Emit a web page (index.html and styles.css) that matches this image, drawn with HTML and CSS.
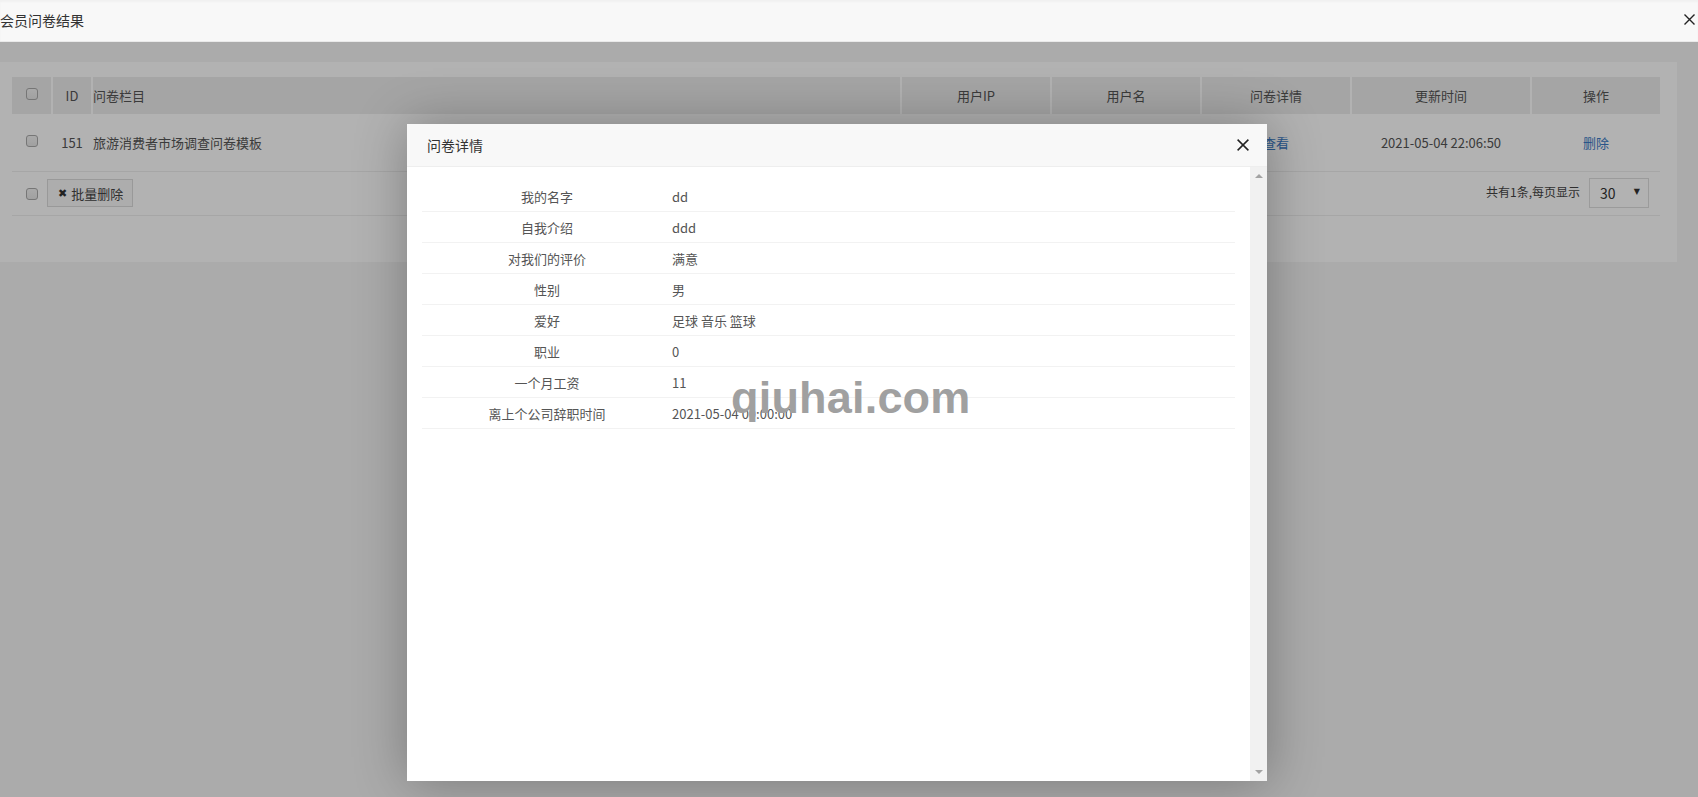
FILE: index.html
```html
<!DOCTYPE html>
<html lang="zh-CN">
<head>
<meta charset="utf-8">
<title>会员问卷结果</title>
<link rel="stylesheet" href="styles.css">
</head>
<body>
<div class="layer-title">
  <span class="layer-title-text">会员问卷结果</span>
  <svg class="layer-close" width="11" height="11" viewBox="0 0 11 11"><path d="M0.5 0.5 L10.5 10.5 M10.5 0.5 L0.5 10.5" stroke="#222" stroke-width="1.4" fill="none"/></svg>
</div>
<div class="content">
  <div class="panel">
    <div class="grid head">
      <div class="cell c-center"><span class="cb"></span></div>
      <div class="cell c-center">ID</div>
      <div class="cell">问卷栏目</div>
      <div class="cell c-center">用户IP</div>
      <div class="cell c-center">用户名</div>
      <div class="cell c-center">问卷详情</div>
      <div class="cell c-center">更新时间</div>
      <div class="cell c-center">操作</div>
    </div>
    <div class="grid row">
      <div class="cell c-center"><span class="cb"></span></div>
      <div class="cell c-center">151</div>
      <div class="cell">旅游消费者市场调查问卷模板</div>
      <div class="cell c-center"></div>
      <div class="cell c-center"></div>
      <div class="cell c-center"><a class="link">查看</a></div>
      <div class="cell c-center">2021-05-04 22:06:50</div>
      <div class="cell c-center"><a class="link">删除</a></div>
    </div>
    <div class="foot">
      <div class="foot-left">
        <span class="cb"></span>
        <button class="btn"><span class="btn-icon">✖</span>批量删除</button>
      </div>
      <div class="foot-right">
        <span class="page-info">共有1条,每页显示</span>
        <div class="select"><span>30</span><span class="select-arrow">▼</span></div>
      </div>
    </div>
  </div>

  <div class="shade"></div>

  <div class="modal">
    <div class="modal-head">
      <span class="modal-title">问卷详情</span>
      <svg class="modal-close" width="12" height="12" viewBox="0 0 12 12"><path d="M0.6 0.6 L11.4 11.4 M11.4 0.6 L0.6 11.4" stroke="#222" stroke-width="1.5" fill="none"/></svg>
    </div>
    <div class="modal-body">
      <div class="modal-scroll">
        <div class="drow"><div class="dlabel">我的名字</div><div class="dvalue">dd</div></div>
        <div class="drow"><div class="dlabel">自我介绍</div><div class="dvalue">ddd</div></div>
        <div class="drow"><div class="dlabel">对我们的评价</div><div class="dvalue">满意</div></div>
        <div class="drow"><div class="dlabel">性别</div><div class="dvalue">男</div></div>
        <div class="drow"><div class="dlabel">爱好</div><div class="dvalue">足球 音乐 篮球</div></div>
        <div class="drow"><div class="dlabel">职业</div><div class="dvalue">0</div></div>
        <div class="drow"><div class="dlabel">一个月工资</div><div class="dvalue">11</div></div>
        <div class="drow"><div class="dlabel">离上个公司辞职时间</div><div class="dvalue">2021-05-04 00:00:00</div></div>
      </div>
      <div class="scrollbar">
        <span class="sb-up"></span>
        <span class="sb-down"></span>
      </div>
    </div>
  </div>

  <div class="watermark">qiuhai.com</div>
</div>
</body>
</html>
```

FILE: styles.css
```css
* { box-sizing: border-box; }

html, body {
  margin: 0;
  padding: 0;
  height: 797px;
  overflow: hidden;
}

body {
  font-family: "Noto Sans CJK SC", "Noto Sans", sans-serif;
  color: #333;
  background: #f5f5f5;
  position: relative;
}

.layer-title {
  height: 42px;
  background: #f8f8f8;
  border-bottom: 1px solid #e9e9e9;
  display: flex;
  align-items: center;
  justify-content: space-between;
  padding: 0 3px 0 0;
  font-size: 14px;
  color: #333;
  box-shadow: inset 0 2px 2px rgba(0,0,0,0.03);
}

.layer-title-text {
  line-height: 41px;
}

.layer-close {
  display: block;
  margin-top: -2px;
}

.content {
  position: relative;
  height: 755px;
  padding-top: 20px;
  background: #f5f5f5;
}

.panel {
  background: #fff;
  margin-right: 21px;
  padding: 15px 17px 46px 12px;
}

.grid {
  display: grid;
  grid-template-columns: 39px 38px 1fr 148px 148px 148px 178px 128px;
  column-gap: 2px;
  font-size: 13px;
  color: #555;
}

.cell {
  display: flex;
  align-items: center;
  white-space: nowrap;
}

.c-center {
  justify-content: center;
}

.head {
  height: 37px;
}

.head .cell {
  background: #ececec;
}

.head .cb {
  margin-top: -3px;
}

.row {
  height: 58px;
  border-bottom: 1px solid #eee;
}

.row .cb {
  margin-top: -3px;
}

.link {
  color: #3b7ac4;
  text-decoration: none;
}

.cb {
  display: inline-block;
  width: 12px;
  height: 12px;
  border: 1px solid #a9a9a9;
  border-radius: 3px;
  background: linear-gradient(#f3f3f3, #e6e6e6);
}

.foot {
  height: 44px;
  border-bottom: 1px solid #eee;
  display: flex;
  align-items: center;
  justify-content: space-between;
  padding: 0 11px 1px 14px;
}

.foot-left {
  display: flex;
  align-items: center;
  gap: 9px;
}

.foot-left .cb {
  margin-top: 2px;
}

.btn {
  height: 28px;
  padding: 0 9px 0 10px;
  border: 1px solid #dcdcdc;
  background: #f8f8f8;
  font-family: inherit;
  font-size: 13px;
  color: #444;
  display: flex;
  align-items: center;
  gap: 4px;
}

.btn-icon {
  font-family: "DejaVu Sans", sans-serif;
  font-size: 11px;
  font-weight: bold;
  color: #333;
}

.foot-right {
  display: flex;
  align-items: center;
  gap: 9px;
}

.page-info {
  font-size: 12px;
  color: #444;
  margin-top: -4px;
}

.select {
  width: 60px;
  height: 30px;
  border: 1px solid #dedede;
  background: #fff;
  display: flex;
  align-items: center;
  justify-content: space-between;
  padding: 0 8px 0 10px;
  font-size: 14px;
  color: #333;
}

.select-arrow {
  font-family: "DejaVu Sans", sans-serif;
  font-size: 8px;
  margin-top: -3px;
}

.shade {
  position: absolute;
  left: 0;
  top: 0;
  right: 0;
  bottom: 0;
  background: rgba(0, 0, 0, 0.3);
}

.modal {
  position: absolute;
  left: 407px;
  top: 82px;
  width: 860px;
  height: 657px;
  background: #fff;
  box-shadow: 1px 1px 50px rgba(0, 0, 0, 0.3);
  display: flex;
  flex-direction: column;
}

.modal-head {
  height: 43px;
  background: #f8f8f8;
  border-bottom: 1px solid #eee;
  display: flex;
  align-items: center;
  justify-content: space-between;
  padding: 0 18px 0 20px;
  flex: none;
}

.modal-title {
  font-size: 14px;
  color: #333;
}

.modal-close {
  display: block;
}

.modal-body {
  flex: 1;
  display: flex;
  min-height: 0;
}

.modal-scroll {
  flex: 1;
  padding: 14px 15px 0 15px;
}

.drow {
  display: flex;
  height: 31px;
  border-bottom: 1px solid #f2f2f2;
  font-size: 13px;
  color: #555;
  align-items: center;
}

.dlabel {
  width: 250px;
  text-align: center;
  flex: none;
}

.dvalue {
  flex: 1;
}

.scrollbar {
  width: 17px;
  flex: none;
  background: #f1f1f1;
  position: relative;
}

.sb-up, .sb-down {
  position: absolute;
  left: 5px;
  width: 0;
  height: 0;
  border-left: 4px solid transparent;
  border-right: 4px solid transparent;
}

.sb-up {
  top: 7px;
  border-bottom: 4px solid #a3a3a3;
}

.sb-down {
  bottom: 7px;
  border-top: 4px solid #a3a3a3;
}

.watermark {
  position: absolute;
  left: 731px;
  top: 333px;
  font-family: "Liberation Sans", Arial, sans-serif;
  font-weight: bold;
  font-size: 45px;
  line-height: 45px;
  color: #a0a0a0;
  letter-spacing: 0.2px;
  pointer-events: none;
}
```
